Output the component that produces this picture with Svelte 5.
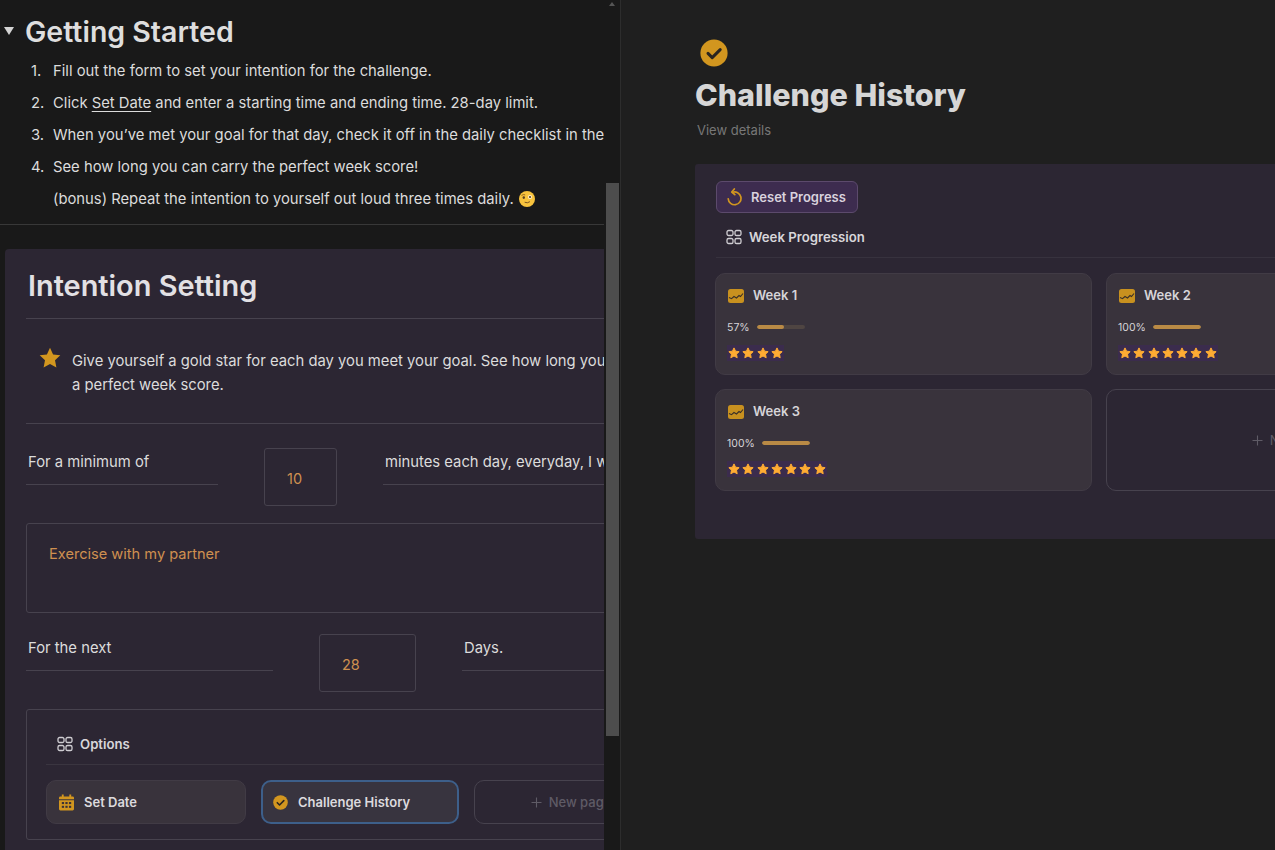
<script>
	const steps = [
		'Fill out the form to set your intention for the challenge.',
		null,
		'When you’ve met your goal for that day, check it off in the daily checklist in the',
		'See how long you can carry the perfect week score!'
	];
	const weeks = [
		{ name: 'Week 1', pct: 57, stars: 4 },
		{ name: 'Week 2', pct: 100, stars: 7 },
		{ name: 'Week 3', pct: 100, stars: 7 }
	];
	const STAR = 'M12 1.8l3.1 6.6 7.2.9-5.3 5 1.4 7.2L12 18l-6.4 3.5L7 14.3l-5.3-5 7.2-.9z';
</script>

{#snippet gridIcon()}
	<svg class="grid-icon" viewBox="0 0 16 16" fill="none" stroke="currentColor" stroke-width="1.3">
		<rect x="1" y="1.5" width="6" height="5" rx="1.6" />
		<rect x="9" y="1.5" width="6" height="5" rx="1.6" />
		<rect x="1" y="9.5" width="6" height="5" rx="1.6" />
		<rect x="9" y="9.5" width="6" height="5" rx="1.6" />
	</svg>
{/snippet}

{#snippet checkIcon(size)}
	<svg width={size} height={size} viewBox="0 0 28 28">
		<circle cx="14" cy="14" r="13.6" fill="#d2961f" />
		<path d="M8 14.4l4.2 4.2 8-8" fill="none" stroke="#2a2520" stroke-width="3" stroke-linecap="round" stroke-linejoin="round" />
	</svg>
{/snippet}

{#snippet plusIcon()}
	<svg width="11" height="11" viewBox="0 0 11 11" stroke="currentColor" stroke-width="1.1"><path d="M5.500 0.500v10M0.500 5.500h10" /></svg>
{/snippet}

<div class="page">
	<div class="left">
		<div class="left-scroll">
			<div class="left-inner">
				<h1 class="toggle-title"><span class="caret"></span>Getting Started</h1>
				<ol class="steps">
					{#each steps as step, i}
						<li>
							<span class="num">{i + 1}.</span>
							{#if step}
								<span>{step}</span>
							{:else}
								<span>Click <u>Set Date</u> and enter a starting time and ending time. 28-day limit.</span>
							{/if}
						</li>
					{/each}
					<li>
						<span class="num"></span>
						<span>(bonus) Repeat the intention to yourself out loud three times daily.</span>
						<svg class="emoji" viewBox="0 0 16 16">
							<circle cx="8" cy="8" r="8" fill="#f8c33d" />
							<path d="M2.800 4.200q1.500-1.200 3-.5" fill="none" stroke="#8a5f1c" stroke-width="0.900" stroke-linecap="round" />
							<ellipse cx="4.800" cy="6.600" rx="1.200" ry="1.400" fill="#5a4020" />
							<circle cx="11" cy="6" r="2" fill="#fff3d0" />
							<circle cx="11" cy="6" r="1.100" fill="#5a4020" />
							<path d="M6 11.400q2.400 1.200 4.600-.5" fill="none" stroke="#7a5520" stroke-width="1" stroke-linecap="round" />
						</svg>
					</li>
				</ol>
				<div class="rule"></div>

				<section class="intention">
					<h2>Intention Setting</h2>
					<div class="callout">
						<svg class="callout-star" viewBox="0 0 24 24"><path d={STAR} fill="#d2961f" /></svg>
						<p>Give yourself a gold star for each day you meet your goal. See how long you<br />a perfect week score.</p>
					</div>

					<div class="form-row first">
						<div class="label w192">For a minimum of</div>
						<div class="box w73"><span class="val">10</span></div>
						<div class="label grow">minutes each day, everyday, I will commit to</div>
					</div>

					<div class="textarea">Exercise with my partner</div>

					<div class="form-row second">
						<div class="label w247">For the next</div>
						<div class="box w97"><span class="val">28</span></div>
						<div class="label grow">Days.</div>
					</div>

					<div class="options">
						<div class="options-head">{@render gridIcon()}<span>Options</span></div>
						<div class="option-cards">
							<div class="option">
								<svg width="15" height="17" viewBox="0 0 16 17">
									<path fill="#d2961f" d="M3 0h2v2h6V0h2v2h1.500A1.500 1.500 0 0 1 16 3.500V5H0V3.500A1.500 1.500 0 0 1 1.500 2H3zM0 6h16v9.500a1.500 1.500 0 0 1-1.500 1.500H1.500A1.500 1.500 0 0 1 0 15.500z" />
									<g fill="#3a3238">
										<rect x="3" y="8" width="2.400" height="2.200" /><rect x="6.800" y="8" width="2.400" height="2.200" /><rect x="10.600" y="8" width="2.400" height="2.200" />
										<rect x="3" y="12" width="2.400" height="2.200" /><rect x="6.800" y="12" width="2.400" height="2.200" /><rect x="10.600" y="12" width="2.400" height="2.200" />
									</g>
								</svg>
								<span>Set Date</span>
							</div>
							<div class="option active">{@render checkIcon(15)}<span>Challenge History</span></div>
							<div class="option empty">{@render plusIcon()}<span>New page</span></div>
						</div>
					</div>
				</section>
			</div>
		</div>
		<div class="scrollbar">
			<span class="arrow"></span>
			<span class="thumb"></span>
		</div>
	</div>

	<div class="right">
		<div class="right-inner">
			<div class="page-icon">{@render checkIcon(28)}</div>
			<h1 class="page-title">Challenge History</h1>
			<div class="details">View details</div>

			<section class="board">
				<button class="reset">
					<svg width="18" height="18" viewBox="0 0 18 18" fill="none" stroke="#d2961f" stroke-width="1.700" stroke-linecap="round" stroke-linejoin="round">
						<path d="M6.500 4.300a6.400 6.400 0 1 1-4.300 6.500" />
						<path d="M8.300 1L5.800 4l3 2.700" />
					</svg>
					Reset Progress
				</button>
				<div class="board-head">{@render gridIcon()}<span>Week Progression</span></div>
				<div class="weeks">
					{#each weeks as w}
						<div class="week">
							<div class="week-title">
								<svg width="16" height="14" viewBox="0 0 16 14">
									<rect width="16" height="14" rx="2.500" fill="#c8911f" />
									<path d="M1 8.500l2.500 1.200L6 7.500l2.500 1.500 2.500-2.500 1.500 1L15 4.500" fill="none" stroke="#3a3028" stroke-width="1.100" />
								</svg>
								<span>{w.name}</span>
							</div>
							<div class="week-progress">
								<span class="pct">{w.pct}%</span>
								<span class="track"><span class="fill" style="width: {w.pct}%"></span></span>
							</div>
							<div class="stars">
								{#each Array(w.stars) as _}
									<svg width="12" height="12" viewBox="0 0 24 24"><path d={STAR} fill="#ffac33" stroke="#ffac33" stroke-width="2" stroke-linejoin="round" /></svg>
								{/each}
							</div>
						</div>
					{/each}
					<div class="week empty">{@render plusIcon()}<span>New page</span></div>
				</div>
			</section>
		</div>
	</div>
</div>

<style>
	:global(body) {
		margin: 0;
		background: #1f1f1f;
	}

	.page {
		display: flex;
		width: 1275px;
		height: 850px;
		overflow: hidden;
		font-family: Inter, 'Noto Sans', sans-serif;
		color: #dcdcdc;
	}

	.left {
		display: flex;
		flex: 0 0 620px;
		height: 850px;
		background: #191919;
		border-right: 1px solid #2d2d2d;
	}

	.left-scroll {
		width: 604px;
		overflow: hidden;
	}

	.left-inner {
		width: 900px;
	}

	.toggle-title {
		display: flex;
		align-items: center;
		height: 30px;
		margin: 0;
		padding-top: 16px;
		font-size: 28.500px;
		font-weight: 600;
		color: #dedede;
	}

	.caret {
		width: 0;
		height: 0;
		margin: 0 11px 0 4px;
		border-left: 5px solid transparent;
		border-right: 5px solid transparent;
		border-top: 8px solid #d4d4d4;
	}

	.steps {
		margin: 9px 0 0;
		padding: 0;
		list-style: none;
		font-size: 14.800px;
	}

	.steps li {
		display: flex;
		align-items: center;
		height: 32px;
		padding-left: 31px;
		white-space: nowrap;
	}

	.num {
		flex: 0 0 22px;
	}

	.steps u {
		text-underline-offset: 3px;
	}

	.emoji {
		width: 16px;
		height: 16px;
		margin-left: 5px;
	}

	.rule {
		width: 604px;
		height: 1px;
		margin-top: 9px;
		background: #383838;
	}

	.intention {
		margin: 24px 0 0 5px;
		width: 895px;
		height: 620px;
		padding: 0 21px;
		box-sizing: border-box;
		background: #2c2633;
		border-radius: 4px 0 0 0;
	}

	.intention h2 {
		margin: 0;
		height: 70px;
		line-height: 74px;
		padding-left: 2px;
		font-size: 28.900px;
		font-weight: 600;
		color: #e2e0e4;
		border-bottom: 1px solid #47424e;
		box-sizing: border-box;
	}

	.callout {
		display: flex;
		height: 105px;
		padding: 30px 0 0 14px;
		box-sizing: border-box;
		border-bottom: 1px solid #47424e;
		font-size: 14.800px;
		line-height: 24px;
	}

	.callout-star {
		flex: 0 0 24px;
		width: 24px;
		height: 24px;
		margin: -3px 10px 0 -2px;
	}

	.callout p {
		margin: 0;
		white-space: nowrap;
	}

	.form-row {
		display: flex;
		align-items: flex-start;
		font-size: 14.800px;
	}

	.form-row.first {
		gap: 46px;
		margin-top: 24px;
	}

	.form-row.second {
		gap: 46px;
		margin-top: 21px;
	}

	.label {
		height: 37px;
		padding: 5px 0 0 2px;
		box-sizing: border-box;
		line-height: 18px;
		border-bottom: 1px solid #47424e;
		white-space: nowrap;
	}

	.w192 {
		width: 192px;
	}

	.w247 {
		width: 247px;
	}

	.grow {
		flex: 1;
	}

	.box {
		height: 58px;
		box-sizing: border-box;
		padding: 21px 0 0 22px;
		border: 1px solid #47424e;
		border-radius: 3px;
	}

	.w73 {
		width: 73px;
	}

	.w97 {
		width: 97px;
	}

	.val {
		color: #cf9050;
		font-size: 14.500px;
	}

	.textarea {
		height: 90px;
		margin-top: 17px;
		padding: 21px 22px 0;
		box-sizing: border-box;
		border: 1px solid #47424e;
		border-radius: 3px;
		color: #cf9050;
		font-size: 14.600px;
		line-height: 18px;
	}

	.options {
		height: 131px;
		margin-top: 17px;
		padding: 0 19px;
		box-sizing: border-box;
		border: 1px solid #47424e;
		border-radius: 3px;
	}

	.options-head,
	.board-head {
		display: flex;
		align-items: center;
		gap: 7px;
		font-size: 13.200px;
		font-weight: 600;
		color: #d8d6da;
	}

	.options-head {
		height: 55px;
		padding: 13px 0 0 11px;
		box-sizing: border-box;
		border-bottom: 1px solid #3a3540;
	}

	.grid-icon {
		width: 16px;
		height: 16px;
		color: #cfcdd2;
	}

	.option-cards {
		display: flex;
		gap: 15px;
		margin-top: 15px;
	}

	.option {
		display: flex;
		align-items: center;
		gap: 10px;
		flex: 0 0 200px;
		height: 44px;
		padding-left: 12px;
		box-sizing: border-box;
		background: #39333c;
		border: 1px solid #413b45;
		border-radius: 10px;
		font-size: 13px;
		font-weight: 600;
		color: #dcdade;
	}

	.option.active {
		flex-basis: 198px;
		padding-left: 10px;
		background: #38343f;
		border: 2px solid #3d5f8a;
	}

	.option.empty {
		flex-basis: 194px;
		padding-left: 0;
		justify-content: center;
		gap: 7px;
		background: none;
		border-color: #47424e;
		color: #5f5b66;
		font-weight: 500;
	}

	.scrollbar {
		position: relative;
		flex: 0 0 16px;
		background: #191919;
	}

	.arrow {
		position: absolute;
		top: 2px;
		left: 5px;
		border-left: 3.500px solid transparent;
		border-right: 3.500px solid transparent;
		border-bottom: 4px solid #555;
	}

	.thumb {
		position: absolute;
		top: 183px;
		left: 2px;
		width: 13px;
		height: 553px;
		background: #4d4d4d;
	}

	.right {
		flex: 1;
		min-width: 0;
		overflow: hidden;
		background: #1f1f1f;
	}

	.right-inner {
		width: 900px;
		padding: 39px 0 0 74px;
	}

	.page-icon {
		height: 28px;
		padding-left: 5px;
	}

	.page-title {
		margin: 8px 0 0;
		height: 40px;
		line-height: 40px;
		font-size: 30.500px;
		font-weight: 800;
		color: #d6d6d6;
	}

	.details {
		margin: 7px 0 0 2px;
		height: 17px;
		line-height: 17px;
		font-size: 13px;
		color: #777;
	}

	.board {
		height: 375px;
		margin-top: 25px;
		padding: 17px 0 0 20px;
		box-sizing: border-box;
		background: #2c2633;
		border-radius: 3px 0 0 3px;
	}

	.reset {
		display: flex;
		align-items: center;
		gap: 7px;
		width: 142px;
		height: 32px;
		padding: 0 0 0 9px;
		margin-left: 1px;
		box-sizing: border-box;
		font: inherit;
		font-size: 13px;
		font-weight: 600;
		color: #d9d2de;
		background: #3d2c4f;
		border: 1px solid #5c4a6c;
		border-radius: 6px;
	}

	.board-head {
		height: 45px;
		padding: 3px 0 0 10px;
		margin-left: 1px;
		box-sizing: border-box;
		border-bottom: 1px solid #37323e;
	}

	.weeks {
		display: grid;
		grid-template-columns: 377px 377px;
		gap: 14px;
		margin-top: 15px;
	}

	.week {
		height: 102px;
		padding: 12px 11px 0;
		box-sizing: border-box;
		background: #39333c;
		border: 1px solid #413b45;
		border-radius: 10px;
	}

	.week.empty {
		display: flex;
		align-items: center;
		justify-content: center;
		gap: 7px;
		padding: 0 5px 0 0;
		background: none;
		border-color: #47424e;
		color: #5f5b66;
		font-size: 13px;
	}

	.week-title {
		display: flex;
		align-items: center;
		gap: 9px;
		height: 18px;
		padding-left: 1px;
		font-size: 13px;
		font-weight: 600;
		color: #d6d4d8;
	}

	.week-title svg {
		margin-top: 2px;
	}

	.week-progress {
		display: flex;
		align-items: center;
		gap: 7px;
		margin-top: 16px;
		height: 14px;
		font-size: 10.500px;
		color: #d6d4d8;
	}

	.track {
		display: block;
		width: 48px;
		height: 4px;
		background: #4f4542;
		border-radius: 2px;
		overflow: hidden;
	}

	.fill {
		display: block;
		height: 100%;
		background: #b98a45;
		border-radius: 2px;
	}

	.stars {
		display: inline-flex;
		gap: 2.300px;
		margin-top: 11px;
		padding: 2px 1px;
		background: #3b2c4d;
	}

	.stars svg {
		display: block;
	}
</style>
